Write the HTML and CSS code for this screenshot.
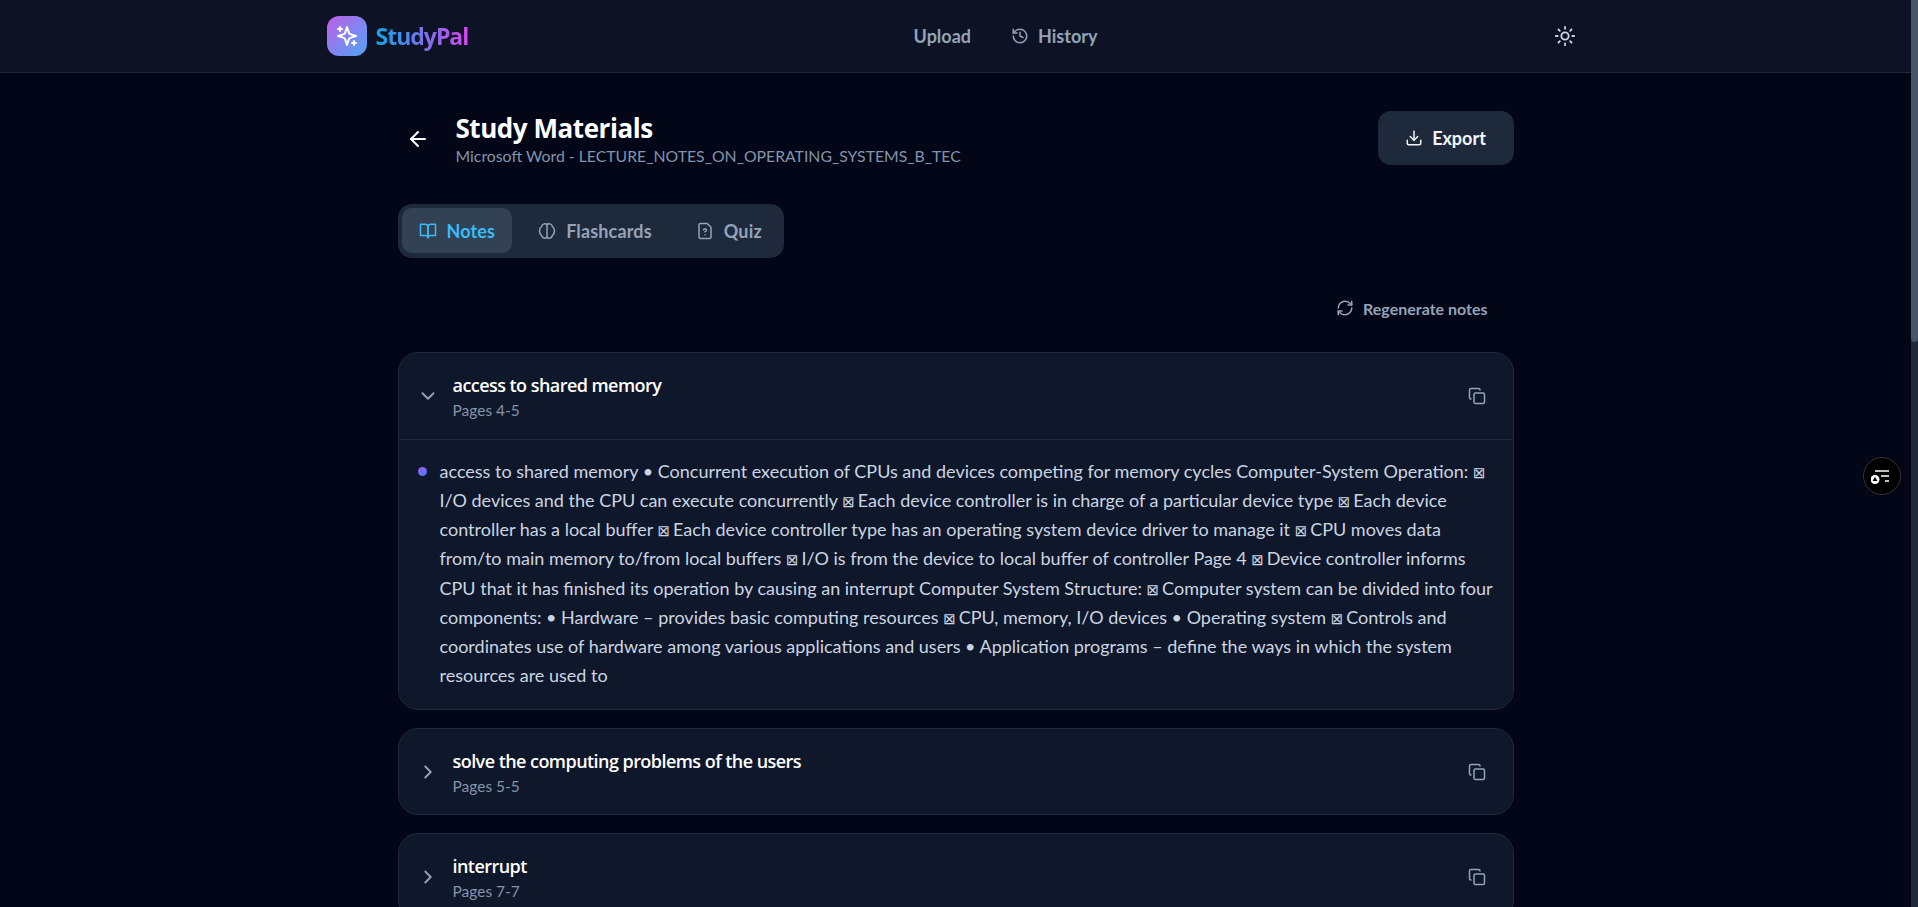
FILE: index.html
```html
<!DOCTYPE html>
<html lang="en">

<head>
    <meta charset="UTF-8">
    <meta name="viewport" content="width=device-width, initial-scale=1.0">
    <title>StudyPal</title>
    <link rel="stylesheet" href="styles.css">
</head>

<body>

    <header class="topbar">
        <div class="topbar-inner">
            <a class="brand">
                <span class="brand-mark">
                    <svg class="icon" width="24" height="24" viewBox="0 0 24 24"><path d="m12 3-1.912 5.813a2 2 0 0 1-1.275 1.275L3 12l5.813 1.912a2 2 0 0 1 1.275 1.275L12 21l1.912-5.813a2 2 0 0 1 1.275-1.275L21 12l-5.813-1.912a2 2 0 0 1-1.275-1.275L12 3Z"/><path d="M5 3v4"/><path d="M19 17v4"/><path d="M3 5h4"/><path d="M17 19h4"/></svg>
                </span>
                <span class="brand-name">StudyPal</span>
            </a>
            <nav class="topnav">
                <a>Upload</a>
                <a>
                    <svg class="icon" width="18" height="18" viewBox="0 0 24 24"><path d="M3 12a9 9 0 1 0 9-9 9.75 9.75 0 0 0-6.74 2.74L3 8"/><path d="M3 3v5h5"/><path d="M12 7v5l4 2"/></svg>
                    History
                </a>
            </nav>
            <button class="theme-btn">
                <svg class="icon" width="22" height="22" viewBox="0 0 24 24"><circle cx="12" cy="12" r="4"/><path d="M12 2v2"/><path d="M12 20v2"/><path d="m4.93 4.93 1.41 1.41"/><path d="m17.66 17.66 1.41 1.41"/><path d="M2 12h2"/><path d="M20 12h2"/><path d="m6.34 17.66-1.41 1.41"/><path d="m19.07 4.93-1.41 1.41"/></svg>
            </button>
        </div>
    </header>

    <main class="page">
        <div class="page-head">
            <div class="page-title">
                <svg class="icon back" width="24" height="24" viewBox="0 0 24 24"><path d="m12 19-7-7 7-7"/><path d="M19 12H5"/></svg>
                <div>
                    <h1>Study Materials</h1>
                    <p>Microsoft Word - LECTURE_NOTES_ON_OPERATING_SYSTEMS_B_TEC</p>
                </div>
            </div>
            <button class="export-btn">
                <svg class="icon" width="18" height="18" viewBox="0 0 24 24"><path d="M21 15v4a2 2 0 0 1-2 2H5a2 2 0 0 1-2-2v-4"/><polyline points="7 10 12 15 17 10"/><line x1="12" y1="15" x2="12" y2="3"/></svg>
                Export
            </button>
        </div>

        <div class="tabs">
            <button class="tab active">
                <svg class="icon" width="18" height="18" viewBox="0 0 24 24"><path d="M2 3h6a4 4 0 0 1 4 4v14a3 3 0 0 0-3-3H2z"/><path d="M22 3h-6a4 4 0 0 0-4 4v14a3 3 0 0 1 3-3h7z"/></svg>
                Notes
            </button>
            <button class="tab">
                <svg class="icon" width="18" height="18" viewBox="0 0 24 24"><path d="M12 3.500c-1-1-2.600-1.500-4-1-2 .6-3 2-3.300 3.600C3 7 2 9 2 12s1 5 2.700 5.900C5 19.500 6 20.900 8 21.500c1.400.5 3 0 4-1 1 1 2.600 1.500 4 1 2-.6 3-2 3.300-3.600C21 17 22 15 22 12s-1-5-2.700-5.900C19 4.500 18 3.100 16 2.500c-1.400-.5-3 0-4 1Z"/><path d="M12 3.500v17"/></svg>
                Flashcards
            </button>
            <button class="tab">
                <svg class="icon" width="18" height="18" viewBox="0 0 24 24"><path d="M15 2H6a2 2 0 0 0-2 2v16a2 2 0 0 0 2 2h12a2 2 0 0 0 2-2V7Z"/><path d="M10 10.300c.2-.4.5-.8.9-1a2.100 2.100 0 0 1 2.600.4c.3.4.5.8.5 1.300 0 1.300-2 2-2 2"/><path d="M12 17h.01"/></svg>
                Quiz
            </button>
        </div>

        <div class="regen-row">
            <button class="regen-btn">
                <svg class="icon" width="18" height="18" viewBox="0 0 24 24"><path d="M3 12a9 9 0 0 1 9-9 9.750 9.750 0 0 1 6.740 2.740L21 8"/><path d="M21 3v5h-5"/><path d="M21 12a9 9 0 0 1-9 9 9.750 9.750 0 0 1-6.740-2.740L3 16"/><path d="M8 16H3v5"/></svg>
                Regenerate notes
            </button>
        </div>

        <section class="note-card open">
            <div class="note-head">
                <svg class="icon chevron" width="22" height="22" viewBox="0 0 24 24"><path d="m6 9 6 6 6-6"/></svg>
                <div class="note-title">
                    <h3>access to shared memory</h3>
                    <span>Pages 4-5</span>
                </div>
                <svg class="icon copy" width="18" height="18" viewBox="0 0 24 24"><rect x="8" y="8" width="14" height="14" rx="2"/><path d="M4 16c-1.100 0-2-.9-2-2V4c0-1.100.9-2 2-2h10c1.100 0 2 .9 2 2"/></svg>
            </div>
            <div class="note-body">
                <span class="dot"></span>
                <p>access to shared memory • Concurrent execution of CPUs and devices competing for memory cycles Computer-System Operation: <span class="tofu">⊠</span><br>
                I/O devices and the CPU can execute concurrently <span class="tofu">⊠</span> Each device controller is in charge of a particular device type <span class="tofu">⊠</span> Each device<br>
                controller has a local buffer <span class="tofu">⊠</span> Each device controller type has an operating system device driver to manage it <span class="tofu">⊠</span> CPU moves data<br>
                from/to main memory to/from local buffers <span class="tofu">⊠</span> I/O is from the device to local buffer of controller Page 4 <span class="tofu">⊠</span> Device controller informs<br>
                CPU that it has finished its operation by causing an interrupt Computer System Structure: <span class="tofu">⊠</span> Computer system can be divided into four<br>
                components: • Hardware – provides basic computing resources <span class="tofu">⊠</span> CPU, memory, I/O devices • Operating system <span class="tofu">⊠</span> Controls and<br>
                coordinates use of hardware among various applications and users • Application programs – define the ways in which the system<br>
                resources are used to</p>
            </div>
        </section>

        <section class="note-card">
            <div class="note-head">
                <svg class="icon chevron" width="22" height="22" viewBox="0 0 24 24"><path d="m9 18 6-6-6-6"/></svg>
                <div class="note-title">
                    <h3>solve the computing problems of the users</h3>
                    <span>Pages 5-5</span>
                </div>
                <svg class="icon copy" width="18" height="18" viewBox="0 0 24 24"><rect x="8" y="8" width="14" height="14" rx="2"/><path d="M4 16c-1.100 0-2-.9-2-2V4c0-1.100.9-2 2-2h10c1.100 0 2 .9 2 2"/></svg>
            </div>
        </section>

        <section class="note-card">
            <div class="note-head">
                <svg class="icon chevron" width="22" height="22" viewBox="0 0 24 24"><path d="m9 18 6-6-6-6"/></svg>
                <div class="note-title">
                    <h3>interrupt</h3>
                    <span>Pages 7-7</span>
                </div>
                <svg class="icon copy" width="18" height="18" viewBox="0 0 24 24"><rect x="8" y="8" width="14" height="14" rx="2"/><path d="M4 16c-1.100 0-2-.9-2-2V4c0-1.100.9-2 2-2h10c1.100 0 2 .9 2 2"/></svg>
            </div>
        </section>
    </main>

    <button class="float-btn">
        <svg width="22" height="22" viewBox="0 0 22 22">
            <path class="float-lines" d="M4 6h14M10 11h8M14 16h4"/>
            <circle class="float-dot" cx="4" cy="14.500" r="4.500"/>
            <path class="float-tri" d="M4 11.800l2.400 4.200H1.600z"/>
        </svg>
    </button>

    <div class="scroll-track"><div class="scroll-thumb"></div></div>

</body>

</html>
```

FILE: styles.css
```css
* {
    box-sizing: border-box;
}

html {
    background-color: #020617;
}

body {
    margin: 0;
    padding-right: 7px;
    background-color: #020617;
    color: #cbd5e1;
    font-family: Lato, "Noto Sans", sans-serif;
}

button {
    font-family: inherit;
    border: none;
    background: none;
    cursor: pointer;
}

h1, h3, p {
    margin: 0;
}

.icon {
    display: block;
    flex: none;
    fill: none;
    stroke: currentColor;
    stroke-width: 2;
    stroke-linecap: round;
    stroke-linejoin: round;
}

.topbar {
    height: 73px;
    background-color: #0d1324;
    border-bottom: 1px solid #1e293b;
}

.topbar-inner {
    max-width: 1280px;
    height: 72px;
    margin: 0 auto;
    padding: 0 11px;
    display: flex;
    align-items: center;
    justify-content: space-between;
}

.brand {
    display: flex;
    align-items: center;
    gap: 9px;
    width: 300px;
}

.brand-mark {
    width: 40px;
    height: 40px;
    border-radius: 12px;
    display: flex;
    align-items: center;
    justify-content: center;
    color: white;
    background: linear-gradient(135deg, #c05ee8, #4ca6f8);
}

.brand-name {
    font-family: "Open Sans", sans-serif;
    font-size: 23px;
    font-weight: 700;
    letter-spacing: -1px;
    color: transparent;
    background: linear-gradient(90deg, #0ea5e9, #d946ef);
    -webkit-background-clip: text;
    background-clip: text;
}

.topnav {
    display: flex;
    align-items: center;
    gap: 40px;
    margin-left: 100px;
    font-size: 18px;
    font-weight: 700;
    color: #94a3b8;
}

.topnav a {
    display: flex;
    align-items: center;
    gap: 9px;
}

.theme-btn {
    width: 300px;
    padding: 0 9px 0 0;
    display: flex;
    justify-content: flex-end;
    color: #cbd5e1;
}

.page {
    width: 1116px;
    margin: 0 auto;
}

.page-head {
    display: flex;
    align-items: flex-start;
    justify-content: space-between;
    padding-top: 38px;
}

.page-title {
    display: flex;
    align-items: center;
    gap: 26px;
    padding: 0 0 0 8px;
}

.back {
    color: white;
}

.page-title h1 {
    font-family: "Open Sans", sans-serif;
    font-size: 26px;
    line-height: 35px;
    font-weight: 700;
    letter-spacing: -0.45px;
    color: white;
}

.page-title p {
    font-size: 15.800px;
    line-height: 20px;
    color: #8494ab;
}

.export-btn {
    width: 136px;
    height: 54px;
    display: flex;
    align-items: center;
    justify-content: center;
    gap: 9px;
    border-radius: 13px;
    background-color: #1e293b;
    color: #f1f5f9;
    font-size: 18px;
    font-weight: 700;
}

.tabs {
    display: inline-flex;
    gap: 8px;
    height: 54px;
    padding: 4px;
    margin-top: 38px;
    border-radius: 14px;
    background-color: #1e293b;
    vertical-align: top;
}

.tab {
    height: 45px;
    padding: 0 18px;
    display: flex;
    align-items: center;
    gap: 10px;
    border-radius: 10px;
    color: #94a3b8;
    font-size: 18px;
    font-weight: 700;
    letter-spacing: 0.15px;
}

.tab.active {
    padding: 0 17px;
    background-color: #334155;
    color: #38bdf8;
}

.regen-row {
    display: flex;
    justify-content: flex-end;
    margin-top: 37px;
    padding-right: 26px;
}

.regen-btn {
    display: flex;
    align-items: center;
    gap: 9px;
    height: 26px;
    padding: 0;
    color: #94a3b8;
    font-size: 16px;
    font-weight: 700;
}

.note-card {
    margin-bottom: 18px;
    border: 1px solid #1e293b;
    border-radius: 20px;
    background-color: #0f172a;
}

.regen-row + .note-card {
    margin-top: 31px;
}

.note-head {
    height: 85px;
    display: flex;
    align-items: center;
    padding: 0 27px 0 18px;
}

.note-card.open .note-head {
    height: 86px;
}

.chevron {
    color: #94a3b8;
    margin-right: 14px;
}

.note-title {
    flex: 1;
    align-self: flex-start;
    display: flex;
    flex-direction: column;
    gap: 2px;
    padding-top: 20px;
}

.note-title h3 {
    font-family: "Open Sans", sans-serif;
    font-size: 18px;
    line-height: 25px;
    font-weight: 600;
    letter-spacing: -0.55px;
    color: white;
}

.note-title span {
    font-size: 15.500px;
    line-height: 20px;
    color: #8494ab;
}

.copy {
    color: #94a3b8;
}

.note-body {
    display: flex;
    gap: 13px;
    padding: 17px 20px 19px 19px;
    border-top: 1px solid #1e293b;
}

.dot {
    flex: none;
    width: 9px;
    height: 9px;
    margin-top: 10px;
    border-radius: 50%;
    background: linear-gradient(135deg, #a855f7, #3b82f6);
}

.note-body p {
    font-size: 18px;
    line-height: 29.150px;
    white-space: nowrap;
}

.tofu {
    font-family: "DejaVu Sans", sans-serif;
    font-size: 15px;
    line-height: 0;
    letter-spacing: -1.700px;
}

.float-btn {
    position: fixed;
    top: 457px;
    right: 17px;
    width: 38px;
    height: 38px;
    padding: 0;
    display: flex;
    align-items: center;
    justify-content: center;
    border-radius: 50%;
    background-color: #000;
    border: 1px solid #333;
}

.float-lines {
    fill: none;
    stroke: white;
    stroke-width: 1.500;
}

.float-dot {
    fill: white;
}

.float-tri {
    fill: #000;
}

.scroll-track {
    position: fixed;
    top: 0;
    right: 0;
    bottom: 0;
    width: 7px;
    background-color: #1e293b;
}

.scroll-thumb {
    height: 342px;
    border-radius: 0 0 4px 4px;
    background-color: #475569;
}
```
